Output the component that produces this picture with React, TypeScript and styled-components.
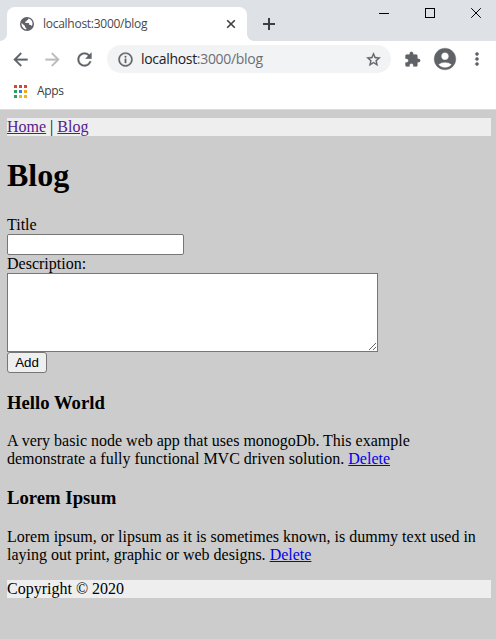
import React from "react";
import styled, { createGlobalStyle } from "styled-components";
import {
  MdAccountCircle,
  MdArrowBack,
  MdArrowForward,
  MdExtension,
  MdInfoOutline,
  MdMoreVert,
  MdRefresh,
  MdStarBorder,
} from "react-icons/md";

const GlobalStyle = createGlobalStyle`
  body { margin: 0; background: #cccccc; overflow: hidden; }
`;

const Window = styled.div`
  display: flex;
  flex-direction: column;
  height: 639px;
  box-sizing: border-box;
  font-family: "Open Sans", "Noto Sans", sans-serif;
  color: #3c4043;

  svg { display: block; flex: none; }
`;

const TabStrip = styled.div`
  display: flex;
  height: 41px;
  flex: none;
  background: #dee1e6;
`;

const Tab = styled.div`
  display: flex;
  align-items: center;
  box-sizing: border-box;
  width: 240px;
  height: 34px;
  margin-top: 7px;
  padding: 0 11px 0 13px;
  border-radius: 8px 8px 0 0;
  background: #fff;
  color: #5f6368;
`;

const TabCurve = styled.div<{ $side: "left" | "right" }>`
  width: 7px;
  height: 7px;
  margin-top: 34px;
  flex: none;
  background: radial-gradient(
    circle at ${(p) => (p.$side === "left" ? "0 0" : "100% 0")},
    transparent 6.5px,
    #fff 7.2px
  );
`;

const TabTitle = styled.span`
  flex: 1;
  margin-left: 9px;
  font-size: 12px;
  letter-spacing: -0.27px;
  line-height: 16px;
  color: #45494d;
`;

const NewTab = styled.div`
  display: flex;
  margin: 18px 0 0 9px;
`;

const WindowControls = styled.div`
  display: flex;
  gap: 36px;
  margin: 8px 15px 0 auto;
`;

const Toolbar = styled.div`
  display: flex;
  align-items: center;
  height: 36px;
  flex: none;
  padding: 0 8px 0 10px;
  background: #fff;
  color: #5f6368;
`;

const ToolButton = styled.div<{ $before?: number; $muted?: boolean }>`
  display: flex;
  margin-left: ${(p) => p.$before ?? 0}px;
  color: ${(p) => (p.$muted ? "#babcbe" : "#5f6368")};

  path { stroke: currentColor; stroke-width: 0.3px; }
  path[fill="none"] { stroke: none; }
`;

const AddressBar = styled.div`
  display: flex;
  align-items: center;
  box-sizing: border-box;
  width: 284px;
  height: 28px;
  margin-left: 12px;
  padding: 0 9.5px 0 9.5px;
  border-radius: 14px;
  background: #f1f3f4;

  path { stroke: currentColor; stroke-width: 0.4px; }
  path[fill="none"] { stroke: none; }
`;

const Address = styled.span`
  flex: 1;
  margin-left: 7.5px;
  font-size: 14px;
  line-height: 20px;
  letter-spacing: -0.31px;
  color: #6b6f74;
`;

const Host = styled.span`
  color: #202124;
`;

const Bookmarks = styled.div`
  display: flex;
  align-items: center;
  gap: 10px;
  box-sizing: border-box;
  height: 33px;
  flex: none;
  padding: 0 14px 4px;
  border-bottom: 1px solid #dadce0;
  background: #fff;
  font-size: 12px;
  letter-spacing: -0.3px;
  line-height: 16px;
`;

const Page = styled.main`
  flex: 1;
  padding: 8px 5px 0 7px;
  background: #cccccc;
  color: #000;
  font: 16px/18px "Liberation Serif", "Times New Roman", serif;
`;

const Band = styled.div`
  height: 18px;
  background: #eeeeee;
`;

const Link = styled.a<{ $visited?: boolean }>`
  color: ${(p) => (p.$visited ? "#551a8b" : "#0000ee")};
  text-decoration: underline;
  cursor: pointer;
`;

const Title = styled.h1`
  margin: 21.44px 0;
  font-size: 32px;
  line-height: 37px;
`;

const Form = styled.form`
  display: flex;
  flex-direction: column;
  align-items: flex-start;
`;

const Label = styled.label`
  height: 18px;
`;

const TextInput = styled.input`
  box-sizing: border-box;
  width: 177px;
  height: 21px;
  margin: 0;
  border: 1px solid #767676;
  border-radius: 2px;
  background: #fff;
`;

const TextArea = styled.textarea`
  box-sizing: border-box;
  width: 371px;
  height: 79px;
  margin: 0;
  border: 1px solid #767676;
  background: #fff;
  resize: both;
`;

const AddButton = styled.button`
  box-sizing: border-box;
  width: 40px;
  height: 21px;
  margin: 0;
  padding: 0;
  border: 1px solid #767676;
  border-radius: 3px;
  background: #efefef;
  color: #000;
  font: 13.333px/17px "Liberation Sans", Arial, sans-serif;
`;

const PostTitle = styled.h3`
  margin: 18.72px 0;
  font-size: 18.72px;
  line-height: 22px;
`;

const PostBody = styled.p`
  margin: 16px 0;
`;

const appColors = [
  "#db4437", "#db4437", "#db4437",
  "#2f9e63", "#2b7de9", "#e8ab1a",
  "#2f9e63", "#f0b41c", "#f0b41c",
];

const posts = [
  {
    title: "Hello World",
    body: "A very basic node web app that uses monogoDb. This example demonstrate a fully functional MVC driven solution.",
  },
  {
    title: "Lorem Ipsum",
    body: "Lorem ipsum, or lipsum as it is sometimes known, is dummy text used in laying out print, graphic or web designs.",
  },
];

const GlobeIcon = () => (
  <svg width="14" height="14" viewBox="0 0 14 14">
    <circle cx="7" cy="7" r="7" fill="#5f6368" />
    <path
      d="M8.2 1.6C8.4 2.7 7.8 3.2 6.9 3.3C6.7 4.2 6.1 4.4 5.4 4.5V6.1H8.3C9.3 6.1 9.3 7.4 9.3 8.1H10.3C11.2 8.1 11.5 8.7 11.8 9.3C13 7.2 12.7 4.7 11.1 3.1C10.3 2.3 9.3 1.8 8.2 1.6ZM1.6 6C1.1 9.2 3.2 12 6.3 12.4V11.1C5.4 11 5 10.4 5 9.6V8.9Z"
      fill="#fff"
    />
  </svg>
);

const AppsIcon = () => (
  <svg width="13" height="13" shapeRendering="crispEdges">
    {appColors.map((c, i) => (
      <rect key={i} x={(i % 3) * 5} y={Math.floor(i / 3) * 5} width="3" height="3" fill={c} />
    ))}
  </svg>
);

const BrowserChrome = () => (
  <>
    <TabStrip>
      <TabCurve $side="left" />
      <Tab>
        <GlobeIcon />
        <TabTitle>localhost:3000/blog</TabTitle>
        <svg width="10" height="10" viewBox="0 0 10 10" stroke="#3c4043" strokeWidth="1.6">
          <path d="M1.2 1.2L8.8 8.8M8.8 1.2L1.2 8.8" />
        </svg>
      </Tab>
      <TabCurve $side="right" />
      <NewTab>
        <svg width="12" height="12" viewBox="0 0 12 12" stroke="#3c4043" strokeWidth="2">
          <path d="M6 0V12M0 6H12" />
        </svg>
      </NewTab>
      <WindowControls>
        <svg width="10" height="10" stroke="#000" shapeRendering="crispEdges">
          <path d="M0 5.5H10" />
        </svg>
        <svg width="10" height="10" fill="none" stroke="#000" shapeRendering="crispEdges">
          <rect x=".5" y=".5" width="9" height="9" />
        </svg>
        <svg width="10" height="10" stroke="#000">
          <path d="M.2 .2L9.8 9.8M9.8 .2L.2 9.8" />
        </svg>
      </WindowControls>
    </TabStrip>
    <Toolbar>
      <ToolButton><MdArrowBack size={21} /></ToolButton>
      <ToolButton $before={11} $muted><MdArrowForward size={21} /></ToolButton>
      <ToolButton $before={11}><MdRefresh size={21} /></ToolButton>
      <AddressBar>
        <MdInfoOutline size={17} />
        <Address><Host>localhost</Host>:3000/blog</Address>
        <MdStarBorder size={17} />
      </AddressBar>
      <ToolButton $before={13}><MdExtension size={17} /></ToolButton>
      <ToolButton $before={11}><MdAccountCircle size={26} /></ToolButton>
      <ToolButton $before={9}><MdMoreVert size={20} /></ToolButton>
    </Toolbar>
    <Bookmarks>
      <AppsIcon />
      <span>Apps</span>
    </Bookmarks>
  </>
);

export default function App() {
  return (
    <Window>
      <GlobalStyle />
      <BrowserChrome />
      <Page>
        <Band as="nav">
          <Link $visited>Home</Link> | <Link $visited>Blog</Link>
        </Band>
        <Title>Blog</Title>
        <Form onSubmit={(e) => e.preventDefault()}>
          <Label htmlFor="title">Title</Label>
          <TextInput id="title" />
          <Label htmlFor="description">Description:</Label>
          <TextArea id="description" />
          <AddButton type="submit">Add</AddButton>
        </Form>
        {posts.map((post) => (
          <article key={post.title}>
            <PostTitle>{post.title}</PostTitle>
            <PostBody>
              {post.body} <Link>Delete</Link>
            </PostBody>
          </article>
        ))}
        <Band as="footer">Copyright © 2020</Band>
      </Page>
    </Window>
  );
}
